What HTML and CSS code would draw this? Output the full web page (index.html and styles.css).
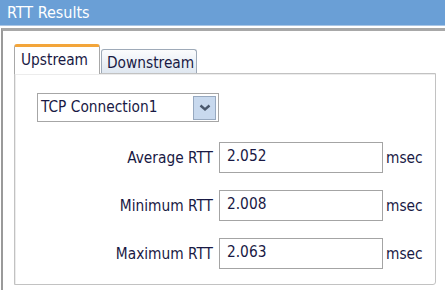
FILE: index.html
```html
<!DOCTYPE html>
<html lang="en">
<head>
    <meta charset="UTF-8">
    <title>RTT Results</title>
    <link rel="stylesheet" href="styles.css">
</head>
<body>

    <div class="titlebar">RTT Results</div>

    <div class="frame">
        <div class="tabs">
            <div class="tab active">Upstream</div>
            <div class="tab">Downstream</div>
        </div>

        <div class="panel">
            <div class="select">
                <span class="select-text">TCP Connection1</span>
                <span class="select-btn">
                    <svg width="12" height="8" viewBox="0 0 12 8">
                        <path d="M1.5 1.5 L6 5.5 L10.5 1.5" fill="none" stroke="#4a586c" stroke-width="2.4"/>
                    </svg>
                </span>
            </div>

            <div class="results">
                <label class="label">Average RTT</label>
                <input class="field" type="text" value="2.052" readonly>
                <span class="unit">msec</span>

                <label class="label">Minimum RTT</label>
                <input class="field" type="text" value="2.008" readonly>
                <span class="unit">msec</span>

                <label class="label">Maximum RTT</label>
                <input class="field" type="text" value="2.063" readonly>
                <span class="unit">msec</span>
            </div>
        </div>
    </div>

</body>
</html>
```

FILE: styles.css
```css
/* window */
body {
    margin: 0;
    background: #fff;
    font-family: "DejaVu Sans Condensed", "DejaVu Sans", sans-serif;
    font-stretch: condensed;
    font-size: 15.3px;
    color: #191944;
}

.titlebar {
    height: 25px;
    line-height: 26px;
    padding-left: 7px;
    background: #6a9fd6;
    border-bottom: 1px solid #a9c6e6;
    color: #fff;
    font-size: 16px;
}

.frame {
    margin: 2px 0 0 1px;
    border-top: 3px solid #a8a8a8;
    border-left: 2px solid #9a9a9a;
    padding: 13px 0 0 11px;
    height: 260px;
}

/* tabs */
.tabs {
    display: flex;
    align-items: flex-end;
    height: 29px;
}

.tab {
    box-sizing: border-box;
    height: 24px;
    padding: 4px 0 0 5px;
    width: 96px;
    border: 1px solid #9eaab8;
    border-bottom: none;
    border-radius: 3px 3px 0 0;
    background: linear-gradient(#fbfcfd, #dfe7f0);
    margin-left: 1px;
}

.tab.active {
    position: relative;
    z-index: 1;
    width: 86px;
    height: 30px;
    margin: 0 0 -1px 0;
    padding: 4px 0 0 6px;
    border: 1px solid #a8a8a8;
    border-top: 3px solid #f3a53a;
    border-bottom: none;
    background: #fff;
}

/* panel */
.panel {
    box-sizing: border-box;
    width: 422px;
    height: 212px;
    border: 1px solid #c2c2c2;
    border-radius: 0 0 3px 0;
    box-shadow: inset 1px 1px 0 #ececec;
    padding: 19px 0 0 22px;
}

.select {
    box-sizing: border-box;
    display: flex;
    align-items: center;
    justify-content: space-between;
    width: 182px;
    height: 29px;
    border: 1px solid #a6a6a6;
    padding: 0 2px 2px 3px;
}

.select-btn {
    display: flex;
    align-items: center;
    justify-content: center;
    box-sizing: border-box;
    width: 23px;
    height: 24px;
    margin-top: 2px;
    border: 1px solid #97a9c0;
    background: #c8d9ee;
}

.results {
    display: grid;
    grid-template-columns: 204px 164px auto;
    row-gap: 17px;
    align-items: center;
    margin: 20px 0 0 -22px;
}

.label {
    text-align: right;
    padding-right: 6px;
}

.field {
    box-sizing: border-box;
    width: 164px;
    height: 31px;
    margin: 0;
    padding: 0 7px 3px;
    border: 1px solid #a4a4a4;
    font: inherit;
    color: inherit;
    outline: none;
}

.unit {
    padding-left: 3px;
}
```
